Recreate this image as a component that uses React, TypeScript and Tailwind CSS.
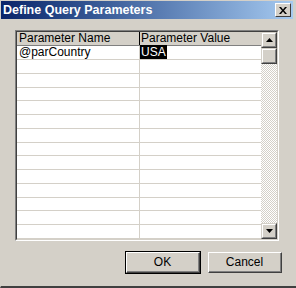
import { useState } from "react"

// Windows 2000 style "Define Query Parameters" dialog

const rows = [
  { name: "@parCountry", value: "USA" },
  ...Array.from({ length: 13 }, () => ({ name: "", value: "" })),
]

function RaisedButton({ label, isDefault }: { label: string; isDefault?: boolean }) {
  return (
    <div className={isDefault ? "border border-black" : "border border-transparent"}>
      <div className="border-t border-l border-white border-r border-b border-r-[#404040] border-b-[#404040]">
        <div className="h-[19px] flex items-center justify-center border-r border-b border-[#808080] text-[12px] text-black">
          {label}
        </div>
      </div>
    </div>
  )
}

function ScrollArrow({ up }: { up?: boolean }) {
  return (
    <div className="w-[16px] h-[16px] bg-[#d4d0c8] border-t border-l border-[#d4d0c8] border-r border-b border-r-[#404040] border-b-[#404040]">
      <div className="w-full h-full border-t border-l border-white border-r border-b border-r-[#808080] border-b-[#808080] flex items-center justify-center">
        <svg width="7" height="4" viewBox="0 0 7 4">
          {up ? <polygon points="3.5,0 7,4 0,4" fill="#000" /> : <polygon points="0,0 7,0 3.5,4" fill="#000" />}
        </svg>
      </div>
    </div>
  )
}

export default function App() {
  const [selected] = useState(0)

  return (
    <div
      className="w-[296px] h-[288px] bg-[#d4d0c8] border-l border-t border-[#d4d0c8] border-b-2 border-b-[#404040] border-r-0 flex flex-col overflow-hidden"
      style={{ fontFamily: '"Liberation Sans", Arial, sans-serif' }}
    >
      {/* Title bar */}
      <div className="h-[18px] mr-[3px] flex items-center justify-between pl-[2px] pr-[2px] bg-gradient-to-r from-[#0a246a] to-[#a6caf0]">
        <span className="text-white font-bold text-[12.5px] leading-none">Define Query Parameters</span>
        <div className="w-[16px] h-[14px] bg-[#d4d0c8] border-t border-l border-white border-r border-b border-r-[#404040] border-b-[#404040] flex items-center justify-center">
          <svg width="8" height="7" viewBox="0 0 8 7">
            <path d="M0 0 L2 0 L4 2.5 L6 0 L8 0 L5 3.5 L8 7 L6 7 L4 4.5 L2 7 L0 7 L3 3.5 Z" fill="#000" />
          </svg>
        </div>
      </div>

      {/* Grid */}
      <div className="mt-[11px] ml-[14px] w-[264px] h-[211px] border-t border-l border-[#808080] border-r border-b border-r-white border-b-white">
        <div className="w-full h-full border-t border-l border-[#404040] border-r border-b border-r-[#d4d0c8] border-b-[#d4d0c8] flex bg-white">
          <div className="flex-1 flex flex-col overflow-hidden">
            {/* Header */}
            <div className="flex h-[14px] bg-[#d4d0c8] border-b border-[#808080] text-[12px] leading-[13px] text-black">
              <div className="w-[123px] pl-[2px] border-r border-black">Parameter Name</div>
              <div className="flex-1 pl-[1px]">Parameter Value</div>
            </div>
            {rows.map((r, i) => (
              <div key={i} className="flex h-[14px] border-b border-[#d4d0c8] text-[12px] leading-[13px] text-black">
                <div className="w-[123px] pl-[2px] border-r border-[#d4d0c8]">{r.name}</div>
                <div className="flex-1">
                  {i === selected && r.value && <span className="bg-black text-white px-[1px]">{r.value}</span>}
                </div>
              </div>
            ))}
          </div>
          {/* Scrollbar */}
          <div className="w-[16px] flex flex-col">
            <ScrollArrow up />
            <div className="w-[16px] h-[16px] bg-[#d4d0c8] border-t border-l border-[#d4d0c8] border-r border-b border-r-[#404040] border-b-[#404040]">
              <div className="w-full h-full border-t border-l border-white border-r border-b border-r-[#808080] border-b-[#808080]" />
            </div>
            <div className="flex-1 [background-image:repeating-conic-gradient(#d4d0c8_0_25%,#ffffff_0_50%)] [background-size:2px_2px]" />
            <ScrollArrow />
          </div>
        </div>
      </div>

      {/* Buttons */}
      <div className="mt-[10px] flex gap-[6px] ml-[124px]">
        <div className="w-[76px]">
          <RaisedButton label="OK" isDefault />
        </div>
        <div className="w-[76px]">
          <RaisedButton label="Cancel" />
        </div>
      </div>
    </div>
  )
}
